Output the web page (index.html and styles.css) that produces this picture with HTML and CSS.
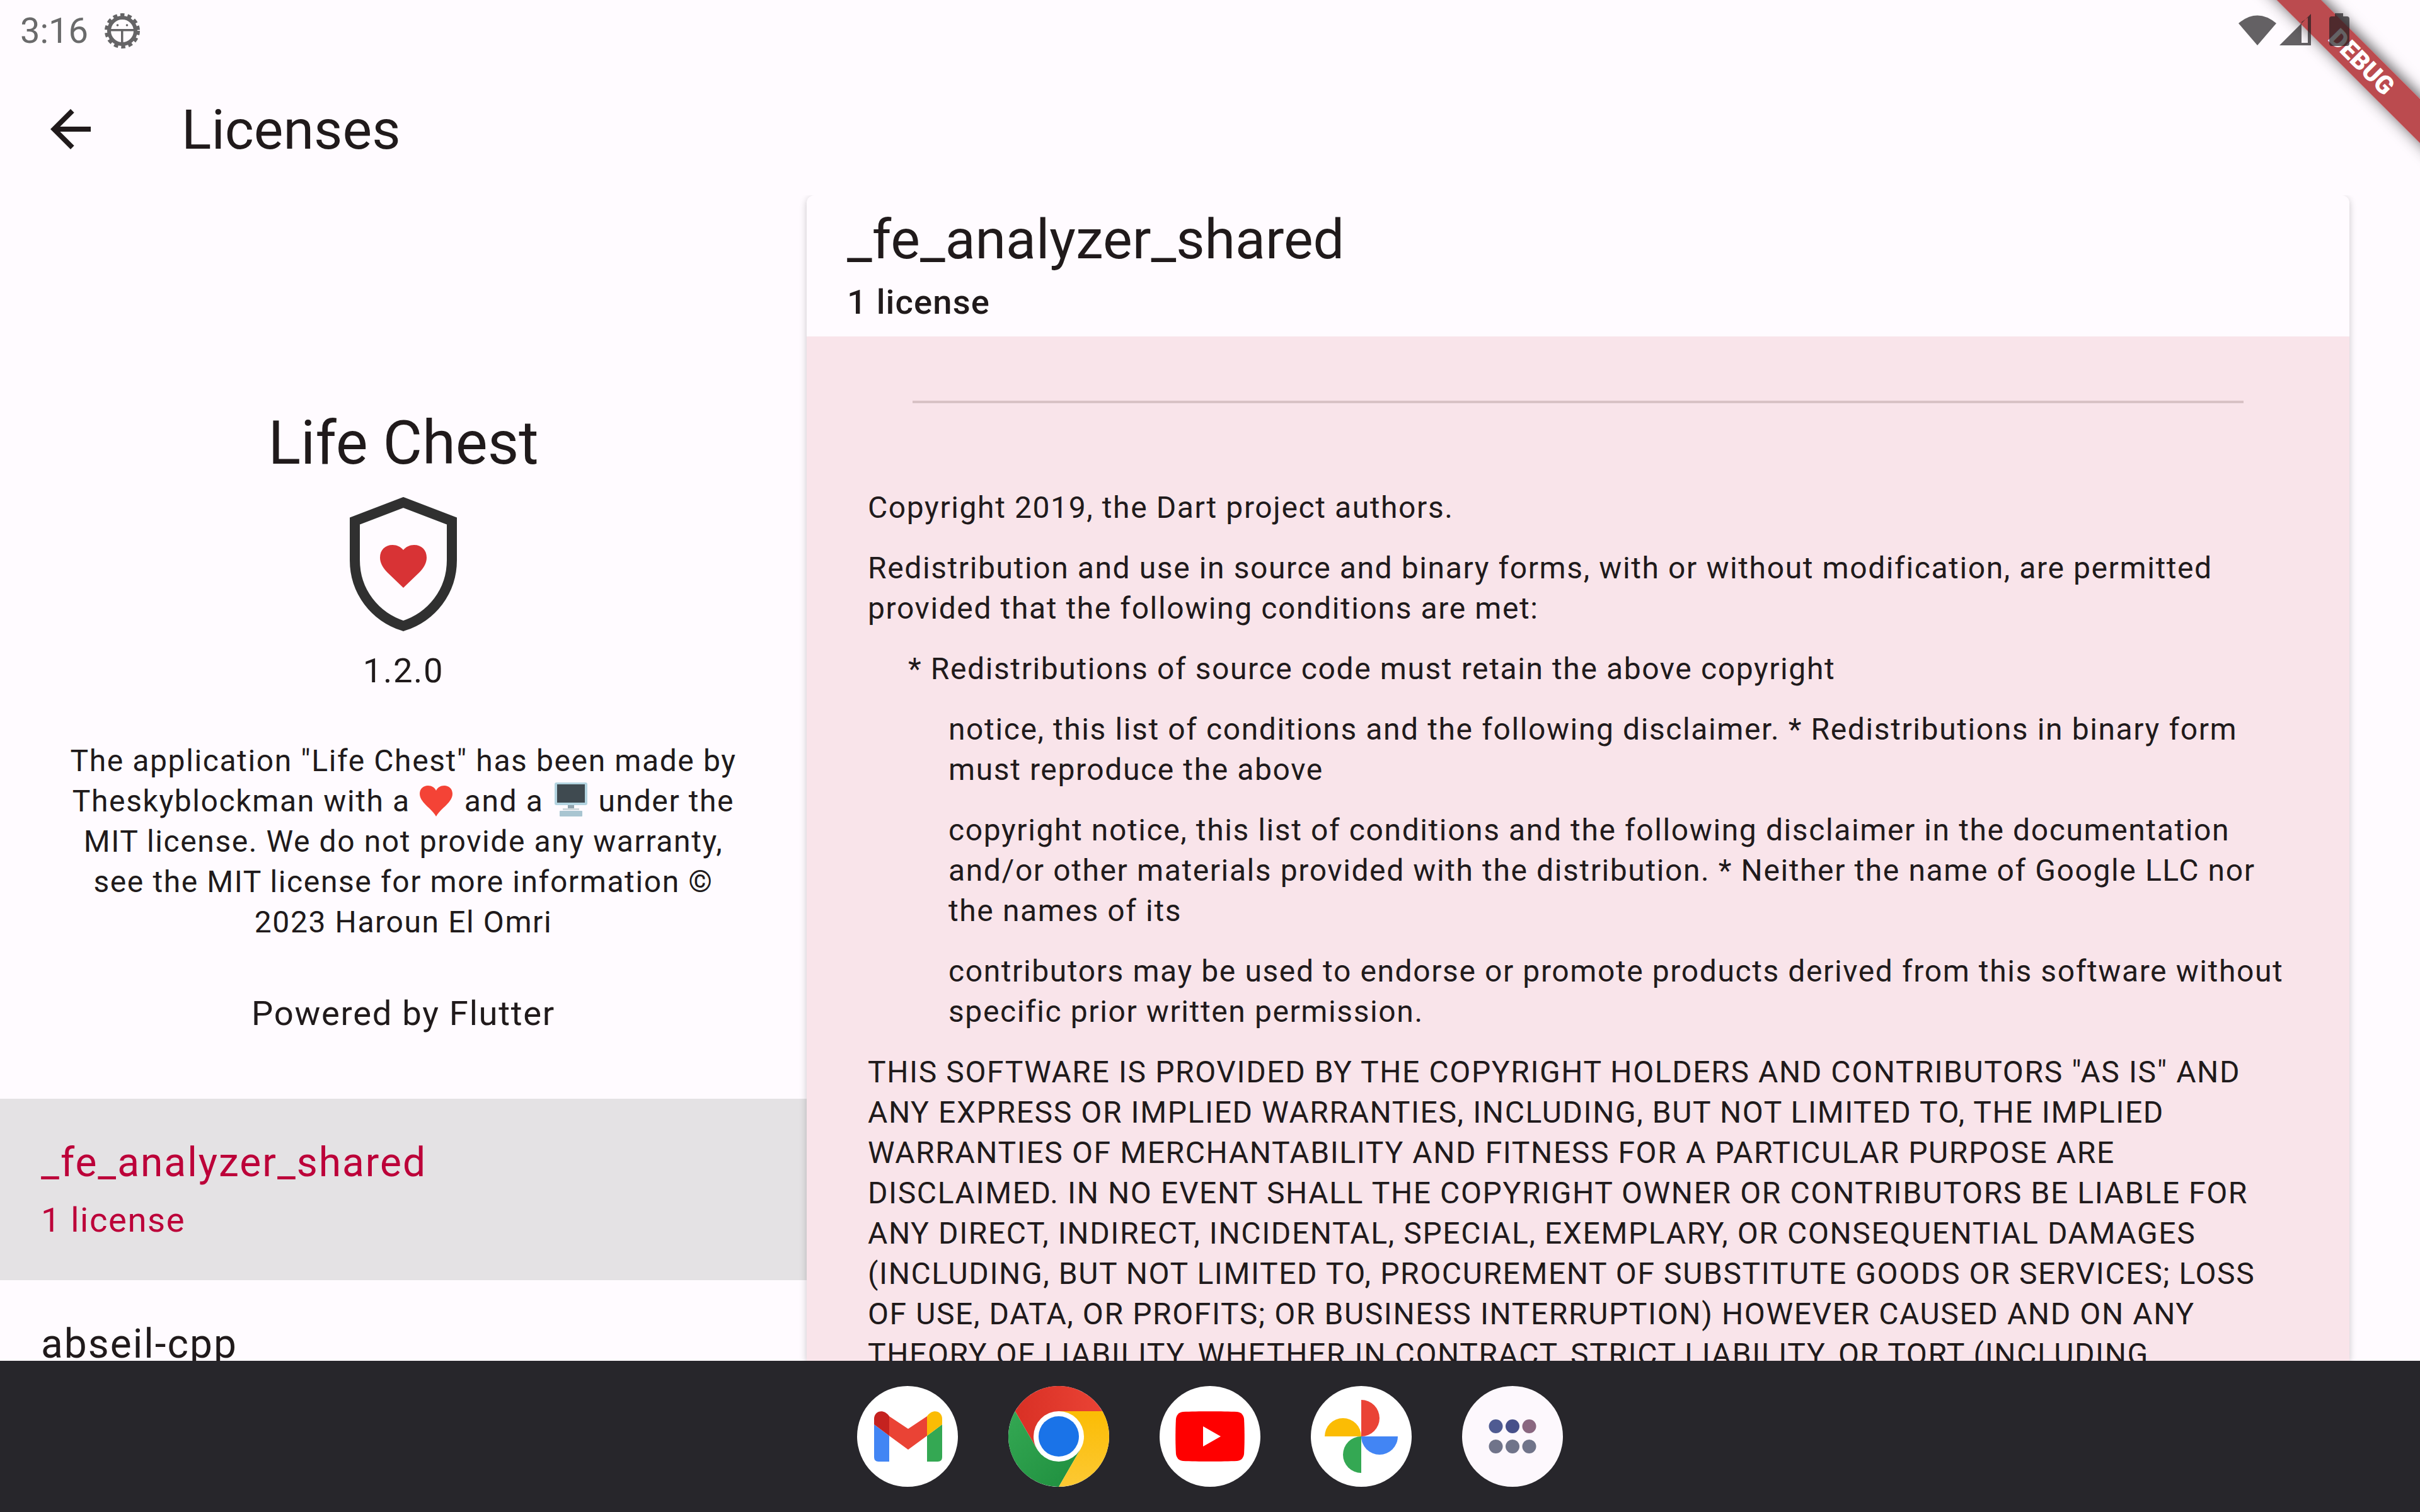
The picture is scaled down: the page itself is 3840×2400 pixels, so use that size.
FILE: index.html
```html
<!DOCTYPE html>
<html lang="en">
<head>
    <meta charset="UTF-8">
    <meta name="viewport" content="width=device-width, initial-scale=1.0">
    <title>Licenses</title>
    <link rel="stylesheet" href="styles.css">
</head>
<body>
    <div class="screen">
        <div class="status-bar">
            <div class="status-left">
                <span class="clock">3:16</span>
                <svg class="bug-icon" width="56" height="56" viewBox="0 0 56 56">
                    <circle cx="28" cy="28" r="25" fill="none" stroke="#656466" stroke-width="6" stroke-dasharray="6.5 4.9"/>
                    <circle cx="28" cy="28" r="21" fill="none" stroke="#656466" stroke-width="6"/>
                    <rect x="7" y="25" width="42" height="3.5" fill="#656466"/>
                    <rect x="26" y="27" width="3.5" height="24" fill="#656466"/>
                    <circle cx="20.5" cy="19" r="1.8" fill="#656466"/>
                    <circle cx="35.5" cy="19" r="1.8" fill="#656466"/>
                </svg>
            </div>
            <div class="status-right">
                <svg class="sys-icon" width="60" height="50" viewBox="0 0 60 50">
                    <path d="M0 15 Q30 -10 60 15 L30 50 Z"/>
                </svg>
                <svg class="sys-icon" width="50" height="50" viewBox="0 0 50 50">
                    <path d="M0 50 L50 0 V50 Z M35 13 V46 H45 V6 Z" fill-rule="evenodd"/>
                </svg>
                <svg class="sys-icon" width="32" height="52" viewBox="0 0 32 52">
                    <path d="M9 0 H22 V5 H28 Q32 5 32 9 V48 Q32 52 28 52 H4 Q0 52 0 48 V9 Q0 5 4 5 H9 Z"/>
                </svg>
            </div>
        </div>

        <div class="app-bar">
            <svg class="back-icon" width="96" height="96" viewBox="0 0 24 24">
                <path d="M20 11H7.83l5.59-5.59L12 4l-8 8 8 8 1.41-1.41L7.83 13H20v-2z" fill="#201a1b"/>
            </svg>
            <h2 class="app-bar-title">Licenses</h2>
        </div>

        <div class="content">
            <div class="side">
                <div class="about">
                    <h1 class="app-name">Life Chest</h1>
                    <svg class="shield" width="170" height="213" viewBox="0 0 170 213">
                        <path d="M85 8.5 L162 38 V100 C162 150 130 190 85 204.5 C40 190 8 150 8 100 V38 Z" fill="none" stroke="#303030" stroke-width="16"/>
                        <path d="M85 144 L60 120 C52 112 48 104 48 96 C48 84 56 76 68 76 C75 76 81 79 85 84 C89 79 95 76 102 76 C114 76 122 84 122 96 C122 104 118 112 110 120 Z" fill="#d83335"/>
                    </svg>
                    <p class="version">1.2.0</p>
                    <p class="legal">The application "Life Chest" has been made by Theskyblockman with a <svg class="emoji emoji-heart" role="img" aria-label="heart" width="56" height="50" viewBox="0 0 56 50"><path d="M28 50 C22 38 2 28 2 14 C2 6 8 1 15 1 C21 1 26 4 28 9 C30 4 35 1 41 1 C48 1 54 6 54 14 C54 28 34 38 28 50 Z" fill="#f44336"/></svg> and a <svg class="emoji" role="img" aria-label="computer" width="54" height="54" viewBox="0 0 54 54"><rect x="1" y="0" width="52" height="36" rx="3" fill="#b3d4e0"/><rect x="5" y="3" width="44" height="29" fill="#3f4a50"/><rect x="22" y="36" width="10" height="6" fill="#90a4ae"/><rect x="14" y="41" width="26" height="3" fill="#cfd8dc"/><rect x="9" y="45" width="36" height="9" rx="1" fill="#a9c5d1"/></svg> under the MIT license. We do not provide any warranty, see the MIT license for more information © 2023 Haroun El Omri</p>
                    <p class="powered">Powered by Flutter</p>
                </div>
                <div class="package package-selected">
                    <div class="package-name">_fe_analyzer_shared</div>
                    <div class="package-count">1 license</div>
                </div>
                <div class="package">
                    <div class="package-name">abseil-cpp</div>
                </div>
            </div>

            <div class="detail">
                <div class="detail-head">
                    <div class="detail-title">_fe_analyzer_shared</div>
                    <div class="detail-sub">1 license</div>
                </div>
                <div class="license">
                    <hr class="license-rule">
                    <p>Copyright 2019, the Dart project authors.</p>
                    <p>Redistribution and use in source and binary forms, with or without modification, are permitted provided that the following conditions are met:</p>
                    <p class="indent-1">* Redistributions of source code must retain the above copyright</p>
                    <p class="indent-2">notice, this list of conditions and the following disclaimer. * Redistributions in binary form must reproduce the above</p>
                    <p class="indent-2">copyright notice, this list of conditions and the following disclaimer in the documentation and/or other materials provided with the distribution. * Neither the name of Google LLC nor the names of its</p>
                    <p class="indent-2">contributors may be used to endorse or promote products derived from this software without specific prior written permission.</p>
                    <p>THIS SOFTWARE IS PROVIDED BY THE COPYRIGHT HOLDERS AND CONTRIBUTORS "AS IS" AND ANY EXPRESS OR IMPLIED WARRANTIES, INCLUDING, BUT NOT LIMITED TO, THE IMPLIED WARRANTIES OF MERCHANTABILITY AND FITNESS FOR A PARTICULAR PURPOSE ARE DISCLAIMED. IN NO EVENT SHALL THE COPYRIGHT OWNER OR CONTRIBUTORS BE LIABLE FOR ANY DIRECT, INDIRECT, INCIDENTAL, SPECIAL, EXEMPLARY, OR CONSEQUENTIAL DAMAGES (INCLUDING, BUT NOT LIMITED TO, PROCUREMENT OF SUBSTITUTE GOODS OR SERVICES; LOSS OF USE, DATA, OR PROFITS; OR BUSINESS INTERRUPTION) HOWEVER CAUSED AND ON ANY THEORY OF LIABILITY, WHETHER IN CONTRACT, STRICT LIABILITY, OR TORT (INCLUDING NEGLIGENCE OR OTHERWISE) ARISING IN ANY WAY OUT OF THE USE OF THIS SOFTWARE.</p>
                </div>
            </div>
        </div>

        <div class="dock">
            <div class="dock-item">
                <svg width="160" height="160" viewBox="0 0 160 160">
                    <g transform="translate(27 39)">
                        <path d="M0 22 L24 40 V81 H7 Q0 81 0 74 Z" fill="#4285f4"/>
                        <path d="M84 40 L108 22 V74 Q108 81 101 81 H84 Z" fill="#34a853"/>
                        <path d="M0 22 V13 C0 1 15 -4 24 9 V40 Z" fill="#c5221f"/>
                        <path d="M84 9 C93 -4 108 1 108 13 V22 L84 40 Z" fill="#fbbc04"/>
                        <path d="M24 9 L54 29 L84 9 V40 L54 62 L24 40 Z" fill="#ea4335"/>
                    </g>
                </svg>
            </div>
            <div class="dock-item">
                <svg width="160" height="160" viewBox="0 0 160 160">
                    <defs>
                        <linearGradient id="chromeRed" x1="0" y1="0" x2="1" y2="0"><stop offset="0" stop-color="#d93025"/><stop offset="1" stop-color="#ea4335"/></linearGradient>
                        <linearGradient id="chromeGreen" x1="0" y1="0" x2="1" y2="1"><stop offset="0" stop-color="#34a853"/><stop offset="1" stop-color="#1e8e3e"/></linearGradient>
                        <linearGradient id="chromeYellow" x1="0" y1="0" x2="0" y2="1"><stop offset="0" stop-color="#fbbc04"/><stop offset="1" stop-color="#fcc934"/></linearGradient>
                    </defs>
                    <path d="M149.3 40 A80 80 0 0 0 10.7 40 L45.4 100 L80 40 Z" fill="url(#chromeRed)"/>
                    <path d="M10.7 40 A80 80 0 0 0 80 160 L114.6 100 L45.4 100 Z" fill="url(#chromeGreen)"/>
                    <path d="M80 160 A80 80 0 0 0 149.3 40 L80 40 L114.6 100 Z" fill="url(#chromeYellow)"/>
                    <circle cx="80" cy="80" r="40" fill="#fff"/>
                    <circle cx="80" cy="80" r="32" fill="#1a73e8"/>
                </svg>
            </div>
            <div class="dock-item">
                <svg width="160" height="160" viewBox="0 0 160 160">
                    <path d="M37 41 C60 40 100 40 123 41 C130 42 133 46 134 52 C135 68 135 92 134 108 C133 114 130 118 123 119 C100 120 60 120 37 119 C30 118 27 114 26 108 C25 92 25 68 26 52 C27 46 30 42 37 41 Z" fill="#f00"/>
                    <path d="M69 64 L97 80 L69 96 Z" fill="#fff"/>
                </svg>
            </div>
            <div class="dock-item">
                <svg width="160" height="160" viewBox="0 0 160 160">
                    <path d="M80 22 A29 29 0 0 1 80 80 Z" fill="#ea4335"/>
                    <path d="M22 80 A29 29 0 0 1 80 80 Z" fill="#fbbc04"/>
                    <path d="M80 80 H138 A29 29 0 0 1 80 80 Z" fill="#4285f4"/>
                    <path d="M80 80 V138 A29 29 0 0 1 80 80 Z" fill="#34a853"/>
                </svg>
            </div>
            <div class="dock-item dock-apps">
                <svg width="160" height="160" viewBox="0 0 160 160">
                    <circle cx="53.5" cy="64" r="11" fill="#4f5b92"/>
                    <circle cx="80" cy="64" r="11" fill="#47508a"/>
                    <circle cx="106.5" cy="64" r="11" fill="#8a6780"/>
                    <circle cx="53.5" cy="96" r="11" fill="#70748a"/>
                    <circle cx="80" cy="96" r="11" fill="#70748a"/>
                    <circle cx="106.5" cy="96" r="11" fill="#70748a"/>
                </svg>
            </div>
        </div>

        <div class="debug-banner">DEBUG</div>
    </div>
</body>
</html>
```

FILE: styles.css
```css
* {
    box-sizing: border-box;
}
body {
    margin: 0;
    background: #fffbff;
    color: #201a1b;
    font-family: Roboto, "Noto Sans", sans-serif;
}
.screen {
    position: relative;
    display: flex;
    flex-direction: column;
    height: 2400px;
    overflow: hidden;
}
.status-bar {
    position: relative;
    z-index: 2;
    display: flex;
    justify-content: space-between;
    align-items: center;
    height: 100px;
    flex-shrink: 0;
    padding: 0 112px 3px 32px;
}
.status-left {
    display: flex;
    align-items: center;
    gap: 26px;
}
.clock {
    font-size: 56px;
    color: #6a6a6b;
}
.status-right {
    display: flex;
    align-items: center;
    gap: 5px;
    padding-bottom: 3px;
}
.status-right svg:last-child {
    margin-left: 24px;
}
.sys-icon {
    fill: rgba(30, 28, 30, 0.69);
}
.app-bar {
    display: flex;
    align-items: center;
    height: 210px;
    flex-shrink: 0;
    padding-left: 64px;
}
.app-bar-title {
    margin: 0 0 0 128px;
    font-size: 88px;
    font-weight: 400;
}
.content {
    display: flex;
    flex: 1;
    min-height: 0;
    overflow: hidden;
}
.side {
    width: 1280px;
    flex-shrink: 0;
    overflow: hidden;
}
.about {
    display: flex;
    flex-direction: column;
    align-items: center;
    padding-top: 337px;
}
.app-name {
    margin: 0;
    font-size: 96px;
    font-weight: 400;
    line-height: 112px;
}
.shield {
    margin-top: 30px;
}
.version {
    margin: 31px 0 0;
    font-size: 54.4px;
    line-height: 64px;
    letter-spacing: 1.6px;
}
.legal {
    width: 1080px;
    margin: 79px 0 0;
    font-size: 48px;
    line-height: 64px;
    letter-spacing: 1.6px;
    text-align: center;
}
.emoji {
    margin: 0 3px;
    vertical-align: -8px;
}
.emoji-heart {
    margin-left: 0;
}
.powered {
    margin: 77px 0 0;
    font-size: 54.4px;
    line-height: 72px;
    letter-spacing: 1.7px;
}
.package {
    padding: 66px 65px 0;
    height: 288px;
}
.package-selected {
    margin-top: 99px;
    background: #e4e2e4;
    color: #bc0039;
}
.package-name {
    font-size: 64px;
    line-height: 72px;
    letter-spacing: 2px;
}
.package-count {
    margin-top: 23px;
    font-size: 54.4px;
    line-height: 64px;
    letter-spacing: 1.6px;
}
.detail {
    width: 2448px;
    flex-shrink: 0;
    display: flex;
    flex-direction: column;
    border-radius: 12px 12px 0 0;
    box-shadow: 0 3px 12px rgba(0, 0, 0, 0.22);
    overflow: hidden;
}
.detail-head {
    height: 224px;
    flex-shrink: 0;
    padding: 20px 64px 0;
}
.detail-title {
    font-size: 88px;
    line-height: 100px;
}
.detail-sub {
    margin-top: 18px;
    font-size: 54.4px;
    line-height: 64px;
    font-weight: 500;
    letter-spacing: 1.1px;
}
.license {
    flex: 1;
    min-height: 0;
    padding: 0 95px 0 97px;
    background: #f9e4ea;
    overflow: hidden;
}
.license p {
    margin: 0 0 32px;
    font-size: 48px;
    line-height: 64px;
    letter-spacing: 1.6px;
}
.license-rule {
    height: 4px;
    margin: 102px 73px 134px 71px;
    border: none;
    background: #d8c2c5;
}
.license .indent-1 {
    padding-left: 64px;
}
.license .indent-2 {
    padding-left: 128px;
}
.dock {
    display: flex;
    justify-content: center;
    align-items: center;
    gap: 80px;
    height: 240px;
    flex-shrink: 0;
    background: #27262b;
}
.dock-item {
    width: 160px;
    height: 160px;
    border-radius: 50%;
    background: #fff;
}
.dock-apps {
    background: #fdf8fd;
}
.debug-banner {
    position: absolute;
    z-index: 1;
    left: 3444px;
    top: 71px;
    width: 600px;
    height: 50px;
    padding-left: 8px;
    transform: rotate(45deg);
    background: rgba(166, 20, 24, 0.76);
    box-shadow: 0 -5px 20px rgba(0, 0, 0, 0.5), 0 5px 22px rgba(0, 0, 0, 0.22);
    color: #fff;
    font-size: 40px;
    font-weight: 900;
    line-height: 50px;
    text-align: center;
}
```
